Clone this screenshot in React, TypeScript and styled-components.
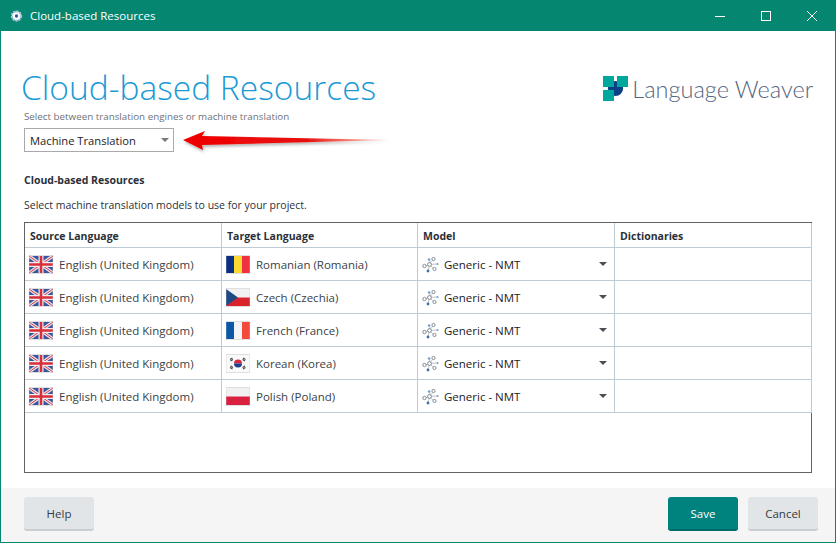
import React from 'react';
import styled, { createGlobalStyle } from 'styled-components';

const GlobalStyle = createGlobalStyle`
  html, body {
    margin: 0;
    padding: 0;
    background: #fff;
  }
  body {
    font-family: "Open Sans", "Noto Sans", "Liberation Sans", sans-serif;
    font-size: 11.5px;
    color: #2b3038;
  }
`;

const Window = styled.div`
  width: 836px;
  height: 543px;
  box-sizing: border-box;
  border: 1px solid #058670;
  border-top: 0;
  display: flex;
  flex-direction: column;
  overflow: hidden;
`;

const TitleBar = styled.div`
  height: 31px;
  flex: none;
  margin: 0 -1px;
  background: #058670;
  color: #fff;
  display: flex;
  align-items: center;
  padding: 0 1px 0 10px;
  font-size: 11.5px;
`;

const TitleText = styled.span`
  margin-left: 7px;
  flex: 1;
`;

const WinButton = styled.div`
  width: 46px;
  height: 31px;
  display: flex;
  align-items: center;
  justify-content: center;
`;

const Content = styled.div`
  flex: 1;
  padding: 0 23px;
  display: flex;
  flex-direction: column;
  position: relative;
`;

const Header = styled.div`
  display: flex;
  justify-content: space-between;
  padding-top: 34px;
  height: 44px;
`;

const Title = styled.h1`
  margin: 0 0 0 -3px;
  font-size: 33.5px;
  font-weight: 300;
  line-height: 44px;
  color: #1b9ad6;
`;

const Logo = styled.div`
  display: flex;
  align-items: center;
  gap: 4px;
  margin: 11px -1px 0 0;
  height: 25px;
  font-family: "Lato", sans-serif;
  font-size: 23.5px;
  font-weight: 300;
  color: #566680;
`;

const Hint = styled.div`
  font-size: 9.8px;
  line-height: 14px;
  margin-top: 1px;
  color: #6d7278;
`;

const Select = styled.div`
  width: 150px;
  height: 24px;
  box-sizing: border-box;
  margin-top: 4px;
  border: 1px solid #a9a9a9;
  display: flex;
  align-items: center;
  justify-content: space-between;
  padding: 0 4px 0 5px;
  font-size: 11.2px;
  color: #1c2127;
`;

const Caret = styled.span<{ $dark?: boolean }>`
  width: 0;
  height: 0;
  border-left: 4px solid transparent;
  border-right: 4px solid transparent;
  border-top: 4px solid ${(p) => (p.$dark ? '#4a4f55' : '#777')};
`;

const ArrowMark = styled.svg`
  position: absolute;
  left: 179px;
  top: 96px;
`;

const SectionTitle = styled.div`
  font-weight: 700;
  font-size: 10.5px;
  line-height: 14px;
  margin-top: 21px;
  color: #2b3038;
`;

const SectionHint = styled.div`
  font-size: 10.5px;
  line-height: 14px;
  margin-top: 11px;
  color: #2b3038;
`;

const Table = styled.div`
  width: 788px;
  height: 251px;
  box-sizing: border-box;
  margin-top: 10px;
  border: 1px solid #626262;
`;

const Row = styled.div<{ $head?: boolean }>`
  display: grid;
  grid-template-columns: 197px 196px 197px 197px;
  height: ${(p) => (p.$head ? '25px' : '33px')};
  box-sizing: border-box;
  border-bottom: 1px solid #bccbd3;
  width: 787px;
`;

const Cell = styled.div`
  display: flex;
  align-items: center;
  gap: 6px;
  padding-left: 4px;
  border-right: 1px solid #bccbd3;
  min-width: 0;
  color: #3a3f46;
  white-space: nowrap;
`;

const HeadCell = styled(Cell)`
  font-weight: 700;
  font-size: 10.5px;
  padding: 1px 0 0 5px;
  color: #2b3038;
`;

const ModelCell = styled(Cell)`
  padding: 0 7px 0 4px;
  gap: 5px;
  color: #1c2127;
`;

const ModelName = styled.span`
  flex: 1;
`;

const Footer = styled.div`
  height: 54px;
  box-sizing: border-box;
  flex: none;
  background: #f5f5f5;
  display: flex;
  align-items: center;
  padding: 0 17px 2px 23px;
  gap: 10px;
`;

const Button = styled.button<{ $primary?: boolean }>`
  width: 70px;
  height: 34px;
  border: 0;
  border-bottom: 2px solid ${(p) => (p.$primary ? '#006b68' : '#c9ced3')};
  border-radius: 3px;
  padding: 0;
  font: inherit;
  background: ${(p) => (p.$primary ? '#00837f' : '#e2e5e8')};
  color: ${(p) => (p.$primary ? '#fff' : '#333a42')};
`;

const Spacer = styled.div`
  flex: 1;
`;

const AppIcon = () => (
  <svg width="13" height="12" viewBox="0 0 13 12">
    <circle cx="6.5" cy="6" r="4.6" fill="#fff" stroke="#a9bfe2" strokeWidth="2.2" strokeDasharray="2 1" />
    <circle cx="6.5" cy="6" r="1.7" fill="#2f5a9c" />
  </svg>
);

const LogoMark = () => (
  <svg width="25" height="25" viewBox="0 0 25 25">
    <circle cx="12.5" cy="12.5" r="7.6" fill="#0b3f86" />
    <path d="M0 0h11v11H0zM14 0h11v11H14zM0 14h11v11H0z" fill="#00a79d" />
  </svg>
);

const FlagFrame = ({ children }: { children: React.ReactNode }) => (
  <svg width="24" height="19" viewBox="0 -1 24 19">
    {children}
    <rect x="0" y="-0.5" width="24" height="18" fill="none" stroke="#c4c4c4" strokeOpacity="0.55" />
  </svg>
);

const Ukf = () => (
  <FlagFrame>
    <rect width="24" height="17" fill="#3a559f" />
    <path d="M0 0L24 17M24 0L0 17" stroke="#e8dfe6" strokeWidth="3.4" />
    <path d="M0 0L24 17M24 0L0 17" stroke="#d8404a" strokeWidth="1" />
    <path d="M12 0V17M0 8.5H24" stroke="#eceef3" strokeWidth="5" />
    <path d="M12 0V17M0 8.5H24" stroke="#d92f3a" strokeWidth="2.6" />
  </FlagFrame>
);

const Romania = () => (
  <FlagFrame>
    <rect width="8" height="17" fill="#0b2f83" />
    <rect x="8" width="8" height="17" fill="#fbd831" />
    <rect x="16" width="8" height="17" fill="#f0313f" />
  </FlagFrame>
);

const Czech = () => (
  <FlagFrame>
    <rect width="24" height="8.5" fill="#f1f1f1" />
    <rect y="8.5" width="24" height="8.5" fill="#d9232c" />
    <path d="M0 0L12 8.5L0 17z" fill="#1d4a83" />
  </FlagFrame>
);

const France = () => (
  <FlagFrame>
    <rect width="8" height="17" fill="#0b57a8" />
    <rect x="8" width="8" height="17" fill="#f4f4f6" />
    <rect x="16" width="8" height="17" fill="#f34a3c" />
  </FlagFrame>
);

const Korea = () => (
  <FlagFrame>
    <rect width="24" height="17" fill="#fafafa" />
    <path d="M8 8.5a4 4 0 0 1 8 0z" fill="#d8283a" />
    <path d="M8 8.5a4 4 0 0 0 8 0z" fill="#1c3f8f" />
    <path d="M4 4.5l2.5-1.5M4.5 6l2.5-1.5M17 3l2.5 1.5M16.5 4.5L19 6M4.5 11l2.5 1.5M4 12.5L6.5 14M19 11l-2.5 1.5M19.5 12.5L17 14" stroke="#444" strokeWidth="1.1" />
  </FlagFrame>
);

const Poland = () => (
  <FlagFrame>
    <rect width="24" height="8.5" fill="#f1f1f3" />
    <rect y="8.5" width="24" height="8.5" fill="#d8203f" />
  </FlagFrame>
);

const ModelIcon = () => (
  <svg width="17" height="17" viewBox="0 0 17 17">
    <g stroke="#a7adb3" strokeWidth="0.7">
      <path d="M7.5 8.5L8 3M7.5 8.5L3 10M7.5 8.5L12 13M7.5 8.5L15 8M7.5 8.5L6 15M7.5 8.5L11.5 3" />
    </g>
    <circle cx="7.5" cy="8.5" r="1.9" fill="#fff" stroke="#7d858d" />
    <circle cx="2.5" cy="10" r="1.7" fill="#fff" stroke="#7d858d" strokeWidth="0.9" />
    <circle cx="11.5" cy="3" r="1.6" fill="#fff" stroke="#7d858d" strokeWidth="0.9" />
    <circle cx="12.5" cy="13" r="1.6" fill="#fff" stroke="#7d858d" strokeWidth="0.9" />
    <circle cx="7" cy="3.5" r="1.2" fill="#6f9fd8" />
    <circle cx="15.5" cy="8" r="1" fill="#6f9fd8" />
    <circle cx="6" cy="15" r="1.4" fill="#3a6fb5" />
  </svg>
);

const targets = [
  { name: 'Romanian (Romania)', Flag: Romania },
  { name: 'Czech (Czechia)', Flag: Czech },
  { name: 'French (France)', Flag: France },
  { name: 'Korean (Korea)', Flag: Korea },
  { name: 'Polish (Poland)', Flag: Poland },
];

const App: React.FC = () => {
  return (
    <Window>
      <GlobalStyle />
      <TitleBar>
        <AppIcon />
        <TitleText>Cloud-based Resources</TitleText>
        <WinButton>
          <svg width="10" height="10" viewBox="0 0 10 10">
            <path d="M0 5.5H10" stroke="#fff" />
          </svg>
        </WinButton>
        <WinButton>
          <svg width="10" height="10" viewBox="0 0 10 10">
            <rect x="0.5" y="0.5" width="9" height="9" fill="none" stroke="#fff" />
          </svg>
        </WinButton>
        <WinButton>
          <svg width="10" height="10" viewBox="0 0 10 10">
            <path d="M0 0L10 10M10 0L0 10" stroke="#fff" />
          </svg>
        </WinButton>
      </TitleBar>
      <Content>
        <Header>
          <Title>Cloud-based Resources</Title>
          <Logo>
            <LogoMark />
            Language Weaver
          </Logo>
        </Header>
        <Hint>Select between translation engines or machine translation</Hint>
        <Select>
          Machine Translation
          <Caret />
        </Select>
        <ArrowMark width="214" height="30" viewBox="0 0 214 30">
          <defs>
            <linearGradient id="arrowFill" x1="0" x2="1" y1="0" y2="0">
              <stop offset="0" stopColor="#f00000" />
              <stop offset="0.6" stopColor="#e81010" />
              <stop offset="1" stopColor="#ff7050" stopOpacity="0.35" />
            </linearGradient>
            <filter id="arrowShadow" x="-5%" y="-40%" width="110%" height="180%">
              <feDropShadow dx="1" dy="2" stdDeviation="1.5" floodColor="#000" floodOpacity="0.3" />
            </filter>
          </defs>
          <path
            d="M3 13L25 4L22 9L210 13L22 18L23 23z"
            fill="url(#arrowFill)"
            filter="url(#arrowShadow)"
          />
        </ArrowMark>
        <SectionTitle>Cloud-based Resources</SectionTitle>
        <SectionHint>Select machine translation models to use for your project.</SectionHint>
        <Table>
          <Row $head>
            <HeadCell>Source Language</HeadCell>
            <HeadCell>Target Language</HeadCell>
            <HeadCell>Model</HeadCell>
            <HeadCell>Dictionaries</HeadCell>
          </Row>
          {targets.map(({ name, Flag }) => (
            <Row key={name}>
              <Cell>
                <Ukf />
                English (United Kingdom)
              </Cell>
              <Cell>
                <Flag />
                {name}
              </Cell>
              <ModelCell>
                <ModelIcon />
                <ModelName>Generic - NMT</ModelName>
                <Caret $dark />
              </ModelCell>
              <Cell />
            </Row>
          ))}
        </Table>
      </Content>
      <Footer>
        <Button>Help</Button>
        <Spacer />
        <Button $primary>Save</Button>
        <Button>Cancel</Button>
      </Footer>
    </Window>
  );
};

export default App;
